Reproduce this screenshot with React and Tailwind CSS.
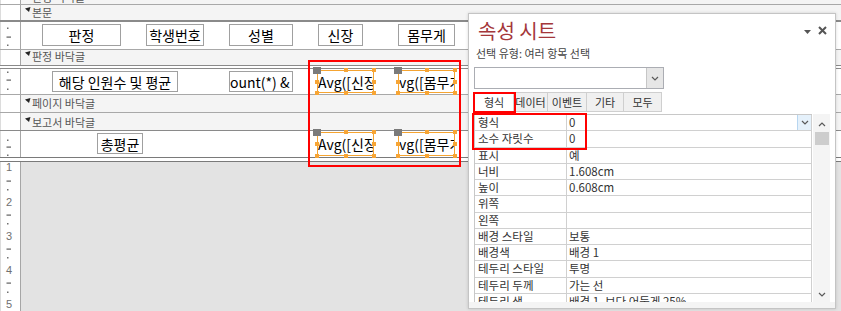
import React from "react";

const props = [
  ["형식", "0"],
  ["소수 자릿수", "0"],
  ["표시", "예"],
  ["너비", "1.608cm"],
  ["높이", "0.608cm"],
  ["위쪽", ""],
  ["왼쪽", ""],
  ["배경 스타일", "보통"],
  ["배경색", "배경 1"],
  ["테두리 스타일", "투명"],
  ["테두리 두께", "가는 선"],
  ["테두리 색", "배경 1, 보다 어둡게 25%"],
];

function Ruler({ h, marks = [] }) {
  return (
    <svg width="19" height={h} className="block">
      {marks.map(([t, y, n], i) =>
        t === "dot" ? (
          <rect key={i} x="6" y={y - 0.5} width="1.5" height="1.5" fill="#707070" />
        ) : t === "dash" ? (
          <rect key={i} x="5.5" y={y - 0.5} width="4.5" height="1.2" fill="#606060" />
        ) : (
          <text key={i} x="8" y={y + 4} textAnchor="middle" fontSize="11" fill="#707070" fontFamily="Liberation Sans, sans-serif">
            {n}
          </text>
        )
      )}
    </svg>
  );
}

function Row({ className = "", ruler = null, children }) {
  return (
    <div className={`flex ${className}`}>
      <div className="w-[21px] shrink-0 self-stretch border-l border-r border-l-[#dcdcdc] border-r-[#a6a6a6] bg-white">{ruler}</div>
      <div className="flex min-w-0 flex-1 items-start">{children}</div>
    </div>
  );
}

function Band({ label, className = "", textClass = "" }) {
  return (
    <Row className={`bg-[#f4f4f4] ${className}`}>
      <div className={`flex items-start pl-[4px] ${textClass}`}>
        <svg width="6" height="5" className="mt-[1px] shrink-0">
          <path d="M0 1.5 L5.5 0 L4 5 Z" fill="#222" />
        </svg>
        <span className="ml-px text-[11px] leading-[13px] text-[#555]">{label}</span>
      </div>
    </Row>
  );
}

function Handle({ className }) {
  return <span className={`absolute h-[4px] w-[4px] bg-[#f7a535] ${className}`} />;
}

// selected text box with its sizing handles
function Sel({ text, className = "" }) {
  return (
    <div className={`relative ${className}`}>
      <div className="flex h-full items-center overflow-hidden whitespace-nowrap border border-[#f5a431] bg-white text-[14px] leading-none text-black">
        {text}
      </div>
      <span className="absolute left-[-4px] top-[-3px] h-[7px] w-[8px] bg-[#7a7a7a]" />
      <Handle className="left-[calc(50%-2px)] top-[-2px]" />
      <Handle className="right-[-2px] top-[-2px]" />
      <Handle className="left-[-2px] top-[calc(50%-2px)]" />
      <Handle className="right-[-2px] top-[calc(50%-2px)]" />
      <Handle className="bottom-[-2px] left-[-2px]" />
      <Handle className="bottom-[-2px] left-[calc(50%-2px)]" />
      <Handle className="bottom-[-2px] right-[-2px]" />
    </div>
  );
}

function Chevron({ up = false }) {
  return (
    <svg width="8" height="5" viewBox="0 0 8 5">
      <path d={up ? "M1 4 L4 1 L7 4" : "M1 1 L4 4 L7 1"} fill="none" stroke="#5a5a5a" strokeWidth="1.2" />
    </svg>
  );
}

function PropertySheet() {
  return (
    <div className="absolute left-[468px] top-[13px] flex h-[296px] w-[368px] flex-col border border-[#c4c4c4] bg-white shadow-[0_0_3px_rgba(0,0,0,0.15)]">
      <div className="mt-[3px] flex h-[28px] items-start justify-between">
        <span className="pl-[9px] text-[20px] leading-[28px] text-[#a4373a]">속성 시트</span>
        <div className="flex items-start pr-[8px]">
          <svg width="7" height="4" className="mt-[13px]">
            <path d="M0 0 L7 0 L3.5 4 Z" fill="#555" />
          </svg>
          <svg width="9" height="9" className="ml-[7px] mt-[9px]">
            <path d="M1 1 L8 8 M8 1 L1 8" stroke="#555" strokeWidth="2" />
          </svg>
        </div>
      </div>
      <div className="mt-px pl-[7px] text-[11px] leading-[14px] text-[#444]">선택 유형: 여러 항목 선택</div>
      <div className="ml-[5px] mt-[7px] flex h-[22px] w-[190px] border border-[#abadb3] bg-white">
        <div className="ml-auto flex w-[17px] items-center justify-center border-l border-[#c6c6c6] bg-[#e6e6e6]">
          <Chevron />
        </div>
      </div>
      <div className="ml-[5px] mt-[3px] flex h-[20px] text-[11px] leading-none text-[#333]">
        <div className="flex w-[40px] items-center justify-center border-x border-t border-[#cfcfcf] bg-white">형식</div>
        <div className="flex w-[34px] items-center justify-center border border-l-0 border-[#cfcfcf] bg-[#f0f0f0]">데이터</div>
        <div className="flex w-[39px] items-center justify-center border border-l-0 border-[#cfcfcf] bg-[#f0f0f0]">이벤트</div>
        <div className="flex w-[37px] items-center justify-center border border-l-0 border-[#cfcfcf] bg-[#f0f0f0]">기타</div>
        <div className="flex w-[38px] items-center justify-center border border-l-0 border-[#cfcfcf] bg-[#f0f0f0]">모두</div>
      </div>
      <div className="mt-[2px] flex h-[188px]">
        <div className="ml-[5px] w-[338px] overflow-hidden border-l border-t border-[#c8c8c8] bg-white">
          {props.map(([k, v], i) => (
            <div key={k} className="flex h-[16.25px] border-b border-r border-[#d0d0d0] text-[11.5px] leading-[15px] text-[#333]">
              <div className="w-[92px] shrink-0 border-r border-[#d0d0d0] pl-[3px]">{k}</div>
              <div className="flex flex-1 pl-[2px]">
                <span>{v}</span>
                {i === 0 && (
                  <div className="ml-auto flex h-[15px] w-[14px] items-center justify-center border-l border-[#b8d6f0] bg-[#e5f1fb]">
                    <Chevron />
                  </div>
                )}
              </div>
            </div>
          ))}
        </div>
        <div className="ml-px flex w-[17px] flex-col items-center bg-[#f4f4f4]">
          <div className="mt-[8px]">
            <Chevron up />
          </div>
          <div className="mt-[5px] h-[13px] w-[14px] bg-[#cdcdcd]" />
          <div className="mt-auto mb-[5px]">
            <Chevron />
          </div>
        </div>
      </div>
      <div className="flex-1 bg-[#f4f4f4]" />
      <div className="absolute left-[4px] top-[78px] h-[21px] w-[43px] border-2 border-[#ff0000]" />
      <div className="absolute left-[3px] top-[99px] h-[37px] w-[115px] border-2 border-[#ff0000]" />
    </div>
  );
}

export default function App() {
  return (
    <div className="relative h-[311px] w-[841px] overflow-hidden bg-[#e3e3e3] font-['Noto_Sans_CJK_KR',sans-serif]">
      {/* tail of the group header bar */}
      <Row className="h-[5px] overflow-hidden border-b border-[#a8a8a8] bg-[#f4f4f4]">
        <span className="-mt-[9px] ml-[11px] text-[11px] leading-[13px] text-[#555]">판정 머리글</span>
      </Row>
      <Band label="본문" className="h-[17px] border-b-2 border-[#8a8a8a]" textClass="pt-px" />
      <Row
        className="h-[28px] border-b border-[#a8a8a8] bg-white"
        ruler={<Ruler h={27} marks={[["dot", 6], ["dash", 15], ["dot", 23]]} />}
      >
        <div className="ml-[21px] mt-[2px] flex h-[22px] w-[79px] items-center justify-center border border-[#a0a0a0] text-[14px] leading-none">판정</div>
        <div className="ml-[25px] mt-[2px] flex h-[22px] w-[58px] items-center justify-center border border-[#a0a0a0] text-[14px] leading-none">학생번호</div>
        <div className="ml-[25px] mt-[2px] flex h-[22px] w-[64px] items-center justify-center border border-[#a0a0a0] text-[14px] leading-none">성별</div>
        <div className="ml-[25px] mt-[2px] flex h-[22px] w-[45px] items-center justify-center border border-[#a0a0a0] text-[14px] leading-none">신장</div>
        <div className="ml-[35px] mt-[2px] flex h-[22px] w-[57px] items-center justify-center border border-[#a0a0a0] text-[14px] leading-none">몸무게</div>
      </Row>
      <Band label="판정 바닥글" className="h-[16px] border-b border-[#8a8a8a]" />
      <div className="h-[2px] bg-white" />
      <div className="h-px bg-[#8a8a8a]" />
      <Row
        className="h-[26px] border-b border-[#a8a8a8] bg-white"
        ruler={<Ruler h={25} marks={[["dot", 3], ["dash", 11], ["dot", 20]]} />}
      >
        <div className="ml-[31px] mt-[2px] flex h-[21px] w-[126px] items-center justify-center border border-[#a0a0a0] text-[14px] leading-none">해당 인원수 및 평균</div>
        <div className="ml-[51px] mt-[2px] flex h-[21px] w-[64px] items-center overflow-hidden whitespace-nowrap border border-[#a0a0a0] text-[14px] leading-none">ount(*) &amp; '</div>
        <Sel text="Avg([신장" className="ml-[24px] mt-px h-[23px] w-[57px]" />
        <Sel text="vg([몸무게" className="ml-[24px] mt-px h-[23px] w-[57px]" />
      </Row>
      <Band label="페이지 바닥글" className="h-[18px] border-b border-[#a8a8a8]" textClass="pt-[2px]" />
      <Band label="보고서 바닥글" className="h-[18px] border-b border-[#8a8a8a]" textClass="pt-[3px]" />
      <Row className="h-[26px] bg-white" ruler={<Ruler h={26} marks={[["dot", 9], ["dash", 16], ["dot", 24]]} />}>
        <div className="ml-[76px] mt-[2px] flex h-[21px] w-[46px] items-center justify-center border border-[#a0a0a0] text-[14px] leading-none">총평균</div>
        <Sel text="Avg([신장" className="ml-[174px] mt-px h-[24px] w-[57px]" />
        <Sel text="vg([몸무게" className="ml-[24px] mt-px h-[24px] w-[57px]" />
      </Row>
      <div className="h-px bg-[#7a7a7a]" />
      <div className="h-[3px] bg-white" />
      <div className="h-px bg-[#7a7a7a]" />
      <Row
        className="h-[149px]"
        ruler={
          <Ruler
            h={149}
            marks={[
              ["num", 5, 1], ["dash", 19], ["dot", 27.5],
              ["num", 40, 2], ["dash", 53], ["dot", 61.5],
              ["num", 74, 3], ["dash", 87], ["dot", 95.5],
              ["num", 108, 4], ["dash", 121], ["dot", 130],
              ["num", 142, 5],
            ]}
          />
        }
      />
      {/* annotation frame */}
      <div className="absolute left-[308px] top-[60px] h-[107px] w-[153px] border-2 border-[#ff0000]" />
      <PropertySheet />
    </div>
  );
}
